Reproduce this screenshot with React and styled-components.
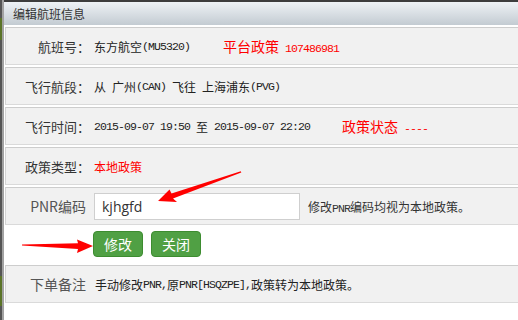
import React from 'react';
import styled, { createGlobalStyle } from 'styled-components';

const GlobalStyle = createGlobalStyle`
  body {
    margin: 0;
    background: #fff;
    font-family: "Noto Sans CJK SC", "Liberation Sans", sans-serif;
  }
`

const Screen = styled.div`
  position: relative;
  display: flex;
  width: 518px;
  height: 320px;
  overflow: hidden;
  background: #fff;
`

const Backdrop = styled.div`
  flex: none;
  width: 4px;
  background:
    linear-gradient(to right, transparent 2px, #a2a2a2 2px),
    linear-gradient(to bottom, #555 0 18px, #5b7428 18px 40px, #555 40px 276px, #5b7428 276px 306px, #555 306px);
`

const Dialog = styled.div`
  flex: 1;
  display: flex;
  flex-direction: column;
`

const TitleBar = styled.div`
  height: 25px;
  box-sizing: border-box;
  border-top: 2px solid #3d3d3d;
  background: linear-gradient(#eef2f5, #c3cbd2);
  padding-left: 9px;
  display: flex;
  align-items: center;
  font-size: 12px;
  color: #333;
`

const Body = styled.div`
  display: flex;
  flex-direction: column;
  padding-left: 1px;
`

const Row = styled.div`
  height: 38px;
  margin-top: 2px;
  box-sizing: border-box;
  background: #f1f1f1;
  border-top: 1px solid #cdcdcd;
  border-bottom: 1px solid #dadada;
  border-left: 1px solid #d4d4d4;
  display: flex;
  align-items: center;
`

const Label = styled.div`
  width: 84px;
  box-sizing: border-box;
  text-align: right;
  font-size: ${p => (p.$big ? '14px' : '13px')};
  color: ${p => (p.$big ? '#555' : '#333')};
  padding-right: ${p => (p.$big ? '4px' : '0')};
  white-space: nowrap;
`

const Value = styled.div`
  margin-left: ${p => p.$gap || 4}px;
  font-size: 12px;
  color: #222;
  white-space: pre;
  display: flex;
  align-items: center;
`

// half-width latin, 6px a character like the bitmap font of the original
const Half = styled.span`
  font-family: "Liberation Mono", monospace;
  font-size: 11.5px;
  letter-spacing: -0.9px;
`

const Red = styled.span`
  color: #f00;
  font-size: ${p => p.$size || 12}px;
  margin-left: ${p => p.$gap || 0}px;
`

const PnrInput = styled.div`
  width: 206px;
  height: 27px;
  box-sizing: border-box;
  border: 1px solid #cfcfcf;
  background: #fff;
  padding-left: 7px;
  display: flex;
  align-items: center;
  font-family: "Open Sans", "Liberation Sans", sans-serif;
  font-size: 14px;
  color: #333;
`

const Hint = styled.span`
  margin-left: 8px;
  font-size: 12px;
  color: #333;
`

const ButtonBar = styled.div`
  height: 38px;
  display: flex;
  align-items: center;
  gap: 8px;
  padding-left: 88px;
`

const Button = styled.button`
  width: 50px;
  height: 26px;
  padding: 0;
  border: 1px solid #3d8c30;
  border-radius: 4px;
  background: #50a044;
  color: #fff;
  font-family: "Noto Sans CJK SC", sans-serif;
  font-size: 14px;
`

const Arrows = styled.svg`
  position: absolute;
  left: 0;
  top: 0;
  pointer-events: none;
`

export default function App() {
  return (
    <Screen>
      <GlobalStyle />
      <Backdrop />
      <Dialog>
        <TitleBar>编辑航班信息</TitleBar>
        <Body>
          <Row>
            <Label>航班号：</Label>
            <Value>
              东方航空<Half>(MU5320)</Half>
              <Red $size={14} $gap={33}>平台政策</Red>
              <Red><Half> 107486981</Half></Red>
            </Value>
          </Row>
          <Row>
            <Label>飞行航段：</Label>
            <Value>
              从<Half> </Half>广州<Half>(CAN) </Half>飞往<Half> </Half>上海浦东<Half>(PVG)</Half>
            </Value>
          </Row>
          <Row>
            <Label>飞行时间：</Label>
            <Value>
              <Half>2015-09-07 19:50 </Half>至<Half> 2015-09-07 22:20</Half>
              <Red $size={14} $gap={32}>政策状态</Red>
              <Red><Half> ----</Half></Red>
            </Value>
          </Row>
          <Row>
            <Label>政策类型：</Label>
            <Value>
              <Red>本地政策</Red>
            </Value>
          </Row>
          <Row>
            <Label $big>PNR编码</Label>
            <Value>
              <PnrInput>kjhgfd</PnrInput>
              <Hint>修改<Half>PNR</Half>编码均视为本地政策。</Hint>
            </Value>
          </Row>
          <ButtonBar>
            <Button>修改</Button>
            <Button>关闭</Button>
          </ButtonBar>
          <Row>
            <Label $big>下单备注</Label>
            <Value $gap={5}>
              手动修改<Half>PNR,</Half>原<Half>PNR[HSQZPE],</Half>政策转为本地政策。
            </Value>
          </Row>
        </Body>
      </Dialog>
      <Arrows width="518" height="320" viewBox="0 0 518 320">
        <polygon
          fill="#f00"
          points="240.8,171.3 171.5,193.4 169.5,189.5 158,201 177,202 173,198.6 241.3,172.6"
        />
        <polygon
          fill="#f00"
          points="22,244.6 78,243.2 77,239.5 93,246 77,253 78,249 22,245.4"
        />
      </Arrows>
    </Screen>
  );
}
